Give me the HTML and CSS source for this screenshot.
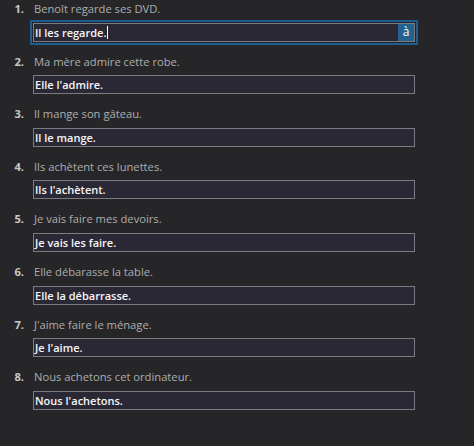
FILE: index.html
```html
<!DOCTYPE html>
<html lang="fr">
<head>
<meta charset="utf-8">
<title>Exercice</title>
<link rel="stylesheet" href="styles.css">
</head>
<body>
<ol class="quiz">
  <li class="item">
    <div class="prompt"><span class="num">1.</span><span class="text">Benoît regarde ses DVD.</span></div>
    <div class="field focused"><span class="value">Il les regarde.<span class="caret"></span></span><span class="accent">à</span></div>
  </li>
  <li class="item">
    <div class="prompt"><span class="num">2.</span><span class="text">Ma mère admire cette robe.</span></div>
    <div class="field"><span class="value">Elle l'admire.</span></div>
  </li>
  <li class="item">
    <div class="prompt"><span class="num">3.</span><span class="text">Il mange son gâteau.</span></div>
    <div class="field"><span class="value">Il le mange.</span></div>
  </li>
  <li class="item">
    <div class="prompt"><span class="num">4.</span><span class="text">Ils achètent ces lunettes.</span></div>
    <div class="field"><span class="value">Ils l'achètent.</span></div>
  </li>
  <li class="item">
    <div class="prompt"><span class="num">5.</span><span class="text">Je vais faire mes devoirs.</span></div>
    <div class="field"><span class="value">Je vais les faire.</span></div>
  </li>
  <li class="item">
    <div class="prompt"><span class="num">6.</span><span class="text">Elle débarasse la table.</span></div>
    <div class="field"><span class="value">Elle la débarrasse.</span></div>
  </li>
  <li class="item">
    <div class="prompt"><span class="num">7.</span><span class="text">J'aime faire le ménage.</span></div>
    <div class="field"><span class="value">Je l'aime.</span></div>
  </li>
  <li class="item">
    <div class="prompt"><span class="num">8.</span><span class="text">Nous achetons cet ordinateur.</span></div>
    <div class="field"><span class="value">Nous l'achetons.</span></div>
  </li>
</ol>
</body>
</html>
```
FILE: styles.css
```css
html, body {
  margin: 0;
  padding: 0;
  background: #262628;
  height: 100%;
}
body {
  font-family: "Open Sans", "Noto Sans", sans-serif;
  font-size: 11.2px;
}
.quiz {
  list-style: none;
  margin: 0;
  padding: 1px 0 0 0;
}
.item {
  height: 52.6px;
  display: flex;
  flex-direction: column;
}
.prompt {
  display: flex;
  align-items: baseline;
  height: 16px;
  line-height: 16px;
  margin-bottom: 5.7px;
}
.num {
  width: 24px;
  text-align: right;
  font-weight: 700;
  color: #c8c8c8;
}
.text {
  margin-left: 10px;
  color: #adadad;
}
.field {
  margin-left: 33px;
  width: 382px;
  height: 19px;
  box-sizing: border-box;
  border: 1px solid #7c7b82;
  background: #2b2836;
  display: flex;
  align-items: center;
  justify-content: space-between;
  color: #f6f6f6;
  font-size: 11px;
  font-weight: 600;
  line-height: 17px;
}
.value {
  padding-left: 1px;
  display: flex;
  align-items: center;
}
.field.focused {
  box-shadow: 0 0 0 1px #1b2530, 0 0 0 3px #1d5e8e;
}
.caret {
  display: inline-block;
  width: 1px;
  height: 13px;
  background: #ffffff;
  margin-left: 1px;
}
.accent {
  height: 17px;
  width: 16px;
  background: #23628f;
  color: #ffffff;
  text-align: center;
  font-size: 12px;
  font-weight: 400;
  line-height: 16px;
}
```
